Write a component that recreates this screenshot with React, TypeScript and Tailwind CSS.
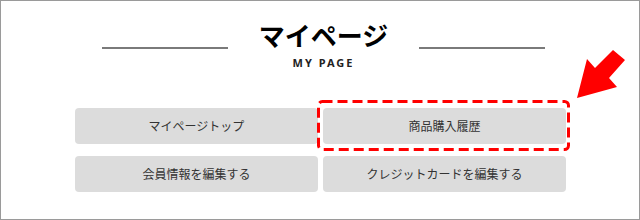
const menu = [
  { label: 'マイページトップ', marked: false },
  { label: '商品購入履歴', marked: true },
  { label: '会員情報を編集する', marked: false },
  { label: 'クレジットカードを編集する', marked: false },
];

function DashedMark() {
  return (
    <svg
      className="absolute -left-[6px] -top-[8px] pointer-events-none"
      width="253"
      height="51"
      viewBox="0 0 253 51"
    >
      <rect
        x="1.5"
        y="1.5"
        width="250"
        height="48"
        rx="4"
        fill="none"
        stroke="#ff0000"
        strokeWidth="3"
        strokeDasharray="10 5"
      />
    </svg>
  );
}

function Arrow() {
  return (
    <svg className="absolute left-[574px] top-[47px]" width="54" height="54" viewBox="0 0 54 54">
      <polygon points="2,50 12,11 20,20 38,2 50,12 34,30 42,39" fill="#ff0000" />
    </svg>
  );
}

export default function App() {
  return (
    <div className="relative w-[640px] h-[220px] border border-[#9a9a9a] bg-white font-['Noto_Sans','Noto_Sans_CJK_JP',sans-serif] text-[#222]">
      <div className="flex justify-center items-start pt-[18px] pl-[7px]">
        <div className="mt-[28px] w-[126px] h-[2px] bg-[#7a7a7a]" />
        <div className="mx-[31px] flex flex-col items-center">
          <h1 className="h-[32px] leading-[32px] text-[26px] font-bold text-black font-['Noto_Sans_CJK_JP',sans-serif]">
            マイページ
          </h1>
          <div className="mt-[5px] leading-[14px] text-[11px] font-bold tracking-[0.18em] text-[#222]">
            MY PAGE
          </div>
        </div>
        <div className="mt-[28px] w-[126px] h-[2px] bg-[#7a7a7a]" />
      </div>

      <div className="ml-[74px] mt-[38px] w-[491px] grid grid-cols-2 gap-x-[5px] gap-y-[12px]">
        {menu.map((item) => (
          <div
            key={item.label}
            className="relative h-[36px] rounded-[4px] bg-[#dcdcdc] flex items-center justify-center text-[12px] text-[#333] font-['Noto_Sans_CJK_JP',sans-serif]"
          >
            {item.label}
            {item.marked && <DashedMark />}
          </div>
        ))}
      </div>

      <Arrow />
    </div>
  );
}
